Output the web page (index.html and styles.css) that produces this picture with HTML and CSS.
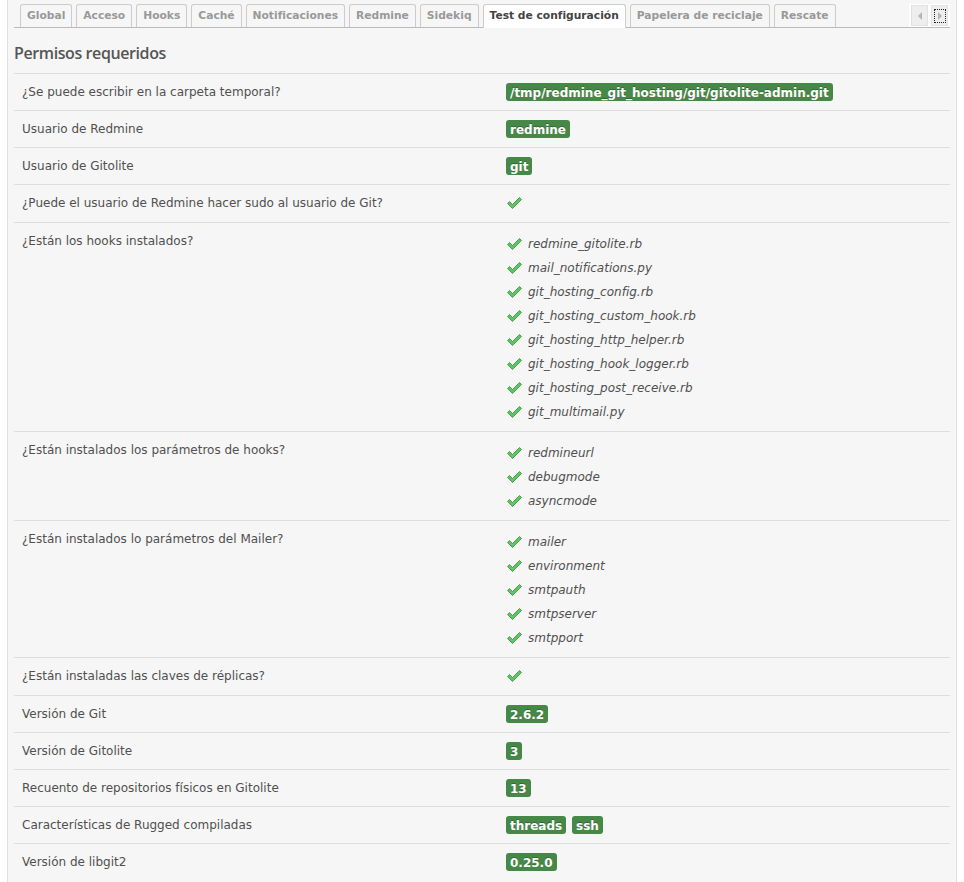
FILE: index.html
```html
<!DOCTYPE html>
<html lang="es">
<head>
<meta charset="utf-8">
<title>Test de configuración</title>
<link rel="stylesheet" href="styles.css">
</head>
<body>
<div class="box">
  <div class="tabs">
    <ul class="tab-list">
      <li class="tab">Global</li>
      <li class="tab">Acceso</li>
      <li class="tab">Hooks</li>
      <li class="tab">Caché</li>
      <li class="tab">Notificaciones</li>
      <li class="tab">Redmine</li>
      <li class="tab">Sidekiq</li>
      <li class="tab tab-active">Test de configuración</li>
      <li class="tab">Papelera de reciclaje</li>
      <li class="tab">Rescate</li>
    </ul>
    <div class="tab-buttons">
      <span class="tab-btn"><svg width="6" height="8" viewBox="0 0 6 8"><polygon points="5,0 5,8 1,4" fill="#b5b5b5"/></svg></span>
      <span class="tab-btn tab-btn-focus"><svg width="6" height="8" viewBox="0 0 6 8"><polygon points="1,0 1,8 5,4" fill="#b5b5b5"/></svg></span>
    </div>
  </div>

  <h3 class="title">Permisos requeridos</h3>

  <table class="list">
    <tbody>
      <tr>
        <td class="label">¿Se puede escribir en la carpeta temporal?</td>
        <td class="value"><span class="badge">/tmp/redmine_git_hosting/git/gitolite-admin.git</span></td>
      </tr>
      <tr>
        <td class="label">Usuario de Redmine</td>
        <td class="value"><span class="badge">redmine</span></td>
      </tr>
      <tr>
        <td class="label">Usuario de Gitolite</td>
        <td class="value"><span class="badge">git</span></td>
      </tr>
      <tr>
        <td class="label">¿Puede el usuario de Redmine hacer sudo al usuario de Git?</td>
        <td class="value"><span class="check single"><svg width="15" height="12" viewBox="0 0 15 12"><polygon points="0.5,6.5 2.5,4.5 5.5,7.5 12.5,0.5 14.5,2.5 5.5,11.5" fill="#62c462" stroke="#3f9a3f" stroke-width="0.9" stroke-linejoin="round"/></svg></span></td>
      </tr>
      <tr>
        <td class="label">¿Están los hooks instalados?</td>
        <td class="value">
          <ul class="checklist">
            <li><span class="check"><svg width="15" height="12" viewBox="0 0 15 12"><polygon points="0.5,6.5 2.5,4.5 5.5,7.5 12.5,0.5 14.5,2.5 5.5,11.5" fill="#62c462" stroke="#3f9a3f" stroke-width="0.9" stroke-linejoin="round"/></svg></span><em>redmine_gitolite.rb</em></li>
            <li><span class="check"><svg width="15" height="12" viewBox="0 0 15 12"><polygon points="0.5,6.5 2.5,4.5 5.5,7.5 12.5,0.5 14.5,2.5 5.5,11.5" fill="#62c462" stroke="#3f9a3f" stroke-width="0.9" stroke-linejoin="round"/></svg></span><em>mail_notifications.py</em></li>
            <li><span class="check"><svg width="15" height="12" viewBox="0 0 15 12"><polygon points="0.5,6.5 2.5,4.5 5.5,7.5 12.5,0.5 14.5,2.5 5.5,11.5" fill="#62c462" stroke="#3f9a3f" stroke-width="0.9" stroke-linejoin="round"/></svg></span><em>git_hosting_config.rb</em></li>
            <li><span class="check"><svg width="15" height="12" viewBox="0 0 15 12"><polygon points="0.5,6.5 2.5,4.5 5.5,7.5 12.5,0.5 14.5,2.5 5.5,11.5" fill="#62c462" stroke="#3f9a3f" stroke-width="0.9" stroke-linejoin="round"/></svg></span><em>git_hosting_custom_hook.rb</em></li>
            <li><span class="check"><svg width="15" height="12" viewBox="0 0 15 12"><polygon points="0.5,6.5 2.5,4.5 5.5,7.5 12.5,0.5 14.5,2.5 5.5,11.5" fill="#62c462" stroke="#3f9a3f" stroke-width="0.9" stroke-linejoin="round"/></svg></span><em>git_hosting_http_helper.rb</em></li>
            <li><span class="check"><svg width="15" height="12" viewBox="0 0 15 12"><polygon points="0.5,6.5 2.5,4.5 5.5,7.5 12.5,0.5 14.5,2.5 5.5,11.5" fill="#62c462" stroke="#3f9a3f" stroke-width="0.9" stroke-linejoin="round"/></svg></span><em>git_hosting_hook_logger.rb</em></li>
            <li><span class="check"><svg width="15" height="12" viewBox="0 0 15 12"><polygon points="0.5,6.5 2.5,4.5 5.5,7.5 12.5,0.5 14.5,2.5 5.5,11.5" fill="#62c462" stroke="#3f9a3f" stroke-width="0.9" stroke-linejoin="round"/></svg></span><em>git_hosting_post_receive.rb</em></li>
            <li><span class="check"><svg width="15" height="12" viewBox="0 0 15 12"><polygon points="0.5,6.5 2.5,4.5 5.5,7.5 12.5,0.5 14.5,2.5 5.5,11.5" fill="#62c462" stroke="#3f9a3f" stroke-width="0.9" stroke-linejoin="round"/></svg></span><em>git_multimail.py</em></li>
          </ul>
        </td>
      </tr>
      <tr>
        <td class="label">¿Están instalados los parámetros de hooks?</td>
        <td class="value">
          <ul class="checklist">
            <li><span class="check"><svg width="15" height="12" viewBox="0 0 15 12"><polygon points="0.5,6.5 2.5,4.5 5.5,7.5 12.5,0.5 14.5,2.5 5.5,11.5" fill="#62c462" stroke="#3f9a3f" stroke-width="0.9" stroke-linejoin="round"/></svg></span><em>redmineurl</em></li>
            <li><span class="check"><svg width="15" height="12" viewBox="0 0 15 12"><polygon points="0.5,6.5 2.5,4.5 5.5,7.5 12.5,0.5 14.5,2.5 5.5,11.5" fill="#62c462" stroke="#3f9a3f" stroke-width="0.9" stroke-linejoin="round"/></svg></span><em>debugmode</em></li>
            <li><span class="check"><svg width="15" height="12" viewBox="0 0 15 12"><polygon points="0.5,6.5 2.5,4.5 5.5,7.5 12.5,0.5 14.5,2.5 5.5,11.5" fill="#62c462" stroke="#3f9a3f" stroke-width="0.9" stroke-linejoin="round"/></svg></span><em>asyncmode</em></li>
          </ul>
        </td>
      </tr>
      <tr>
        <td class="label">¿Están instalados lo parámetros del Mailer?</td>
        <td class="value">
          <ul class="checklist">
            <li><span class="check"><svg width="15" height="12" viewBox="0 0 15 12"><polygon points="0.5,6.5 2.5,4.5 5.5,7.5 12.5,0.5 14.5,2.5 5.5,11.5" fill="#62c462" stroke="#3f9a3f" stroke-width="0.9" stroke-linejoin="round"/></svg></span><em>mailer</em></li>
            <li><span class="check"><svg width="15" height="12" viewBox="0 0 15 12"><polygon points="0.5,6.5 2.5,4.5 5.5,7.5 12.5,0.5 14.5,2.5 5.5,11.5" fill="#62c462" stroke="#3f9a3f" stroke-width="0.9" stroke-linejoin="round"/></svg></span><em>environment</em></li>
            <li><span class="check"><svg width="15" height="12" viewBox="0 0 15 12"><polygon points="0.5,6.5 2.5,4.5 5.5,7.5 12.5,0.5 14.5,2.5 5.5,11.5" fill="#62c462" stroke="#3f9a3f" stroke-width="0.9" stroke-linejoin="round"/></svg></span><em>smtpauth</em></li>
            <li><span class="check"><svg width="15" height="12" viewBox="0 0 15 12"><polygon points="0.5,6.5 2.5,4.5 5.5,7.5 12.5,0.5 14.5,2.5 5.5,11.5" fill="#62c462" stroke="#3f9a3f" stroke-width="0.9" stroke-linejoin="round"/></svg></span><em>smtpserver</em></li>
            <li><span class="check"><svg width="15" height="12" viewBox="0 0 15 12"><polygon points="0.5,6.5 2.5,4.5 5.5,7.5 12.5,0.5 14.5,2.5 5.5,11.5" fill="#62c462" stroke="#3f9a3f" stroke-width="0.9" stroke-linejoin="round"/></svg></span><em>smtpport</em></li>
          </ul>
        </td>
      </tr>
      <tr>
        <td class="label">¿Están instaladas las claves de réplicas?</td>
        <td class="value"><span class="check single"><svg width="15" height="12" viewBox="0 0 15 12"><polygon points="0.5,6.5 2.5,4.5 5.5,7.5 12.5,0.5 14.5,2.5 5.5,11.5" fill="#62c462" stroke="#3f9a3f" stroke-width="0.9" stroke-linejoin="round"/></svg></span></td>
      </tr>
      <tr>
        <td class="label">Versión de Git</td>
        <td class="value"><span class="badge">2.6.2</span></td>
      </tr>
      <tr>
        <td class="label">Versión de Gitolite</td>
        <td class="value"><span class="badge">3</span></td>
      </tr>
      <tr>
        <td class="label">Recuento de repositorios físicos en Gitolite</td>
        <td class="value"><span class="badge">13</span></td>
      </tr>
      <tr>
        <td class="label">Características de Rugged compiladas</td>
        <td class="value"><span class="badge">threads</span> <span class="badge">ssh</span></td>
      </tr>
      <tr>
        <td class="label">Versión de libgit2</td>
        <td class="value"><span class="badge">0.25.0</span></td>
      </tr>
    </tbody>
  </table>
</div>
</body>
</html>
```

FILE: styles.css
```css
html, body {
  margin: 0;
  padding: 0;
  background: #ffffff;
}

body {
  padding-left: 7px;
  font-family: "DejaVu Sans", Verdana, sans-serif;
  font-size: 12px;
  color: #505050;
}

.box {
  width: 936px;
  background: #f6f6f6;
  border: 1px solid #e0e0e0;
  border-top: none;
  padding: 0 6px 6px 6px;
}

/* Tabs */
.tabs {
  display: flex;
  align-items: flex-end;
  padding-top: 4px;
  border-bottom: 1px solid #bbbbbb;
  height: 23px;
}

.tab-list {
  display: flex;
  gap: 4px;
  list-style: none;
  margin: 0;
  padding: 0 0 0 6px;
  align-self: flex-end;
}

.tab {
  font-size: 10.7px;
  font-weight: bold;
  line-height: 14px;
  color: #999999;
  padding: 4px 6px;
  border: 1px solid #cccccc;
  border-bottom: none;
  border-top-left-radius: 3px;
  border-top-right-radius: 3px;
  background: #f6f6f6;
  white-space: nowrap;
}

.tab-active {
  background: #ffffff;
  color: #444444;
  margin-bottom: -1px;
  padding-bottom: 5px;
}

.tab-buttons {
  margin-left: auto;
  background: #ffffff;
  width: 41px;
  height: 23px;
  display: flex;
  align-items: center;
  justify-content: flex-end;
  gap: 3px;
  padding-right: 2px;
  box-sizing: border-box;
}

.tab-btn {
  width: 17px;
  height: 21px;
  box-sizing: border-box;
  background: #eeeeee;
  border: 1px solid #e2e2e2;
  display: flex;
  align-items: center;
  justify-content: center;
}

.tab-btn-focus svg {
  outline: 1px dotted #222;
  outline-offset: 2px;
}

/* Heading */
.title {
  font-family: "Open Sans", "DejaVu Sans", sans-serif;
  font-weight: 600;
  font-size: 16px;
  letter-spacing: -0.4px;
  line-height: 20px;
  color: #555555;
  margin: 15px 0 10px 0;
}

/* Table */
.list {
  width: 100%;
  border-collapse: collapse;
}

.list td {
  border-top: 1px solid #dddddd;
  vertical-align: top;
  line-height: 18px;
  padding: 9px 8px 9px 8px;
}

.list td.label {
  width: 468px;
}

.list td.value {
  padding-bottom: 7px;
}

.badge {
  display: inline-block;
  background: #468847;
  color: #ffffff;
  font-weight: bold;
  font-size: 12px;
  line-height: 14px;
  padding: 3px 4px 1px 4px;
  border-radius: 3px;
  text-shadow: 0 -1px 0 rgba(0, 0, 0, 0.25);
  vertical-align: top;
}

.badge + .badge {
  margin-left: 2px;
}

.checklist {
  list-style: none;
  margin: 0;
  padding: 0;
}

.checklist li {
  height: 24px;
  display: flex;
  align-items: center;
}

.checklist em {
  font-style: italic;
  color: #505050;
}

.check {
  display: inline-flex;
  width: 22px;
  padding-left: 1px;
  box-sizing: border-box;
}

.check.single {
  display: flex;
  height: 21px;
  align-items: flex-start;
  padding-top: 3px;
}
```
